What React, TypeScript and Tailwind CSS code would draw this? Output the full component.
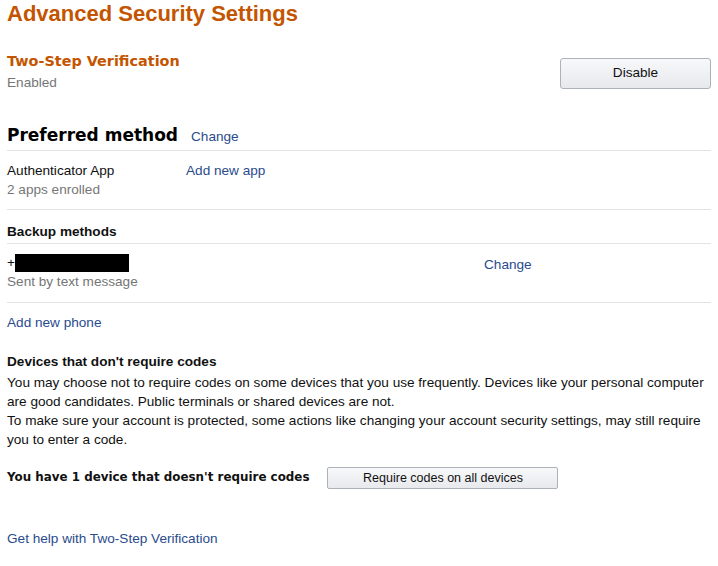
import { useState } from "react";

type Props = {}

const body = "font-['Liberation_Sans',Arial,sans-serif]";
const verdana = "font-['DejaVu_Sans',Verdana,sans-serif]";

function App({ }: Props) {
    const [enabled] = useState(true);

    return (
        <div className={`w-[718px] min-h-[566px] bg-white pl-[7px] pr-[7px] text-[13.6px] text-[#111] ${body}`}>
            <h1 className="pt-[1px] text-[22px] leading-[26px] font-bold text-[#c45500]">Advanced Security Settings</h1>

            <div className="flex items-start justify-between mt-[24px]">
                <div>
                    <h2 className={`${verdana} text-[14.4px] leading-[20px] font-bold text-[#c45500]`}>Two-Step Verification</h2>
                    <p className="mt-[3px] leading-[18px] text-[#767676]">{enabled ? 'Enabled' : 'Disabled'}</p>
                </div>
                <button className="mt-[7px] w-[151px] h-[31px] rounded-[3px] border border-[#adb1b8] bg-linear-to-b from-[#f7f8fa] to-[#e7e9ec] text-[13.6px] text-[#111] cursor-pointer">Disable</button>
            </div>

            <div className="mt-[32px] flex items-baseline gap-[13px] pb-[3px] border-b border-[#e3e3e3]">
                <h2 className={`${verdana} text-[17px] leading-[22px] font-bold text-black`}>Preferred method</h2>
                <a href="#" className="text-[#2a4b8d]">Change</a>
            </div>

            <div className="flex pt-[10px] pb-[10px] border-b border-[#e3e3e3] leading-[19px]">
                <div className="w-[179px]">
                    <p>Authenticator App</p>
                    <p className="text-[#767676]">2 apps enrolled</p>
                </div>
                <a href="#" className="text-[#2a4b8d]">Add new app</a>
            </div>

            <h3 className="mt-[13px] pb-[2px] font-bold leading-[18px] border-b border-[#e3e3e3]">Backup methods</h3>

            <div className="flex pt-[9px] pb-[11px] border-b border-[#e3e3e3] leading-[19px]">
                <div className="w-[477px]">
                    <p className="flex items-center">+<span className="inline-block w-[114px] h-[18px] bg-black"></span></p>
                    <p className="text-[#767676]">Sent by text message</p>
                </div>
                <a href="#" className="mt-[2px] text-[#2a4b8d]">Change</a>
            </div>

            <a href="#" className="block mt-[10px] leading-[19px] text-[#2a4b8d]">Add new phone</a>

            <h3 className="mt-[20px] mb-[2px] font-bold leading-[19px]">Devices that don't require codes</h3>
            <p className="leading-[19px]">You may choose not to require codes on some devices that you use frequently. Devices like your personal computer are good candidates. Public terminals or shared devices are not.</p>
            <p className="leading-[19px]">To make sure your account is protected, some actions like changing your account security settings, may still require you to enter a code.</p>

            <div className="mt-[18px] flex items-center gap-[18px]">
                <p className={`${verdana} text-[11.9px] font-bold`}>You have 1 device that doesn't require codes</p>
                <button className="w-[231px] h-[22px] rounded-[2px] border border-[#adb1b8] bg-linear-to-b from-[#f7f8fa] to-[#e7e9ec] text-[12.5px] text-[#111] cursor-pointer">Require codes on all devices</button>
            </div>

            <a href="#" className="block mt-[40px] leading-[19px] text-[#2a4b8d]">Get help with Two-Step Verification</a>
        </div>
    )
}

export default App
